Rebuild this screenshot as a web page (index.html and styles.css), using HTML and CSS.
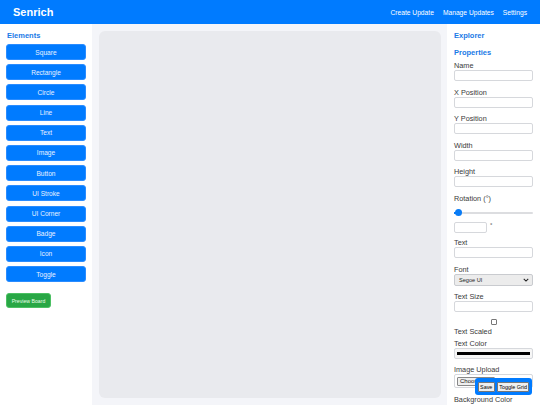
FILE: index.html
```html
<!DOCTYPE html>
<html lang="en">
<head>
<meta charset="utf-8">
<title>Senrich</title>
<link rel="stylesheet" href="styles.css">
</head>
<body>
<header class="topbar">
  <div class="brand">Senrich</div>
  <nav class="nav">
    <a href="#">Create Update</a>
    <a href="#">Manage Updates</a>
    <a href="#">Settings</a>
  </nav>
</header>
<main class="workspace">
  <aside class="elements">
    <h2 class="panel-title">Elements</h2>
    <button class="el-btn">Square</button>
    <button class="el-btn">Rectangle</button>
    <button class="el-btn">Circle</button>
    <button class="el-btn">Line</button>
    <button class="el-btn">Text</button>
    <button class="el-btn">Image</button>
    <button class="el-btn">Button</button>
    <button class="el-btn">UI Stroke</button>
    <button class="el-btn">UI Corner</button>
    <button class="el-btn">Badge</button>
    <button class="el-btn">Icon</button>
    <button class="el-btn">Toggle</button>
    <button class="preview-btn">Preview Board</button>
  </aside>
  <section class="board-wrap">
    <div class="board"></div>
  </section>
  <aside class="inspector">
    <h2 class="panel-title">Explorer</h2>
    <h2 class="panel-title props">Properties</h2>
    <div class="field"><label>Name</label><input class="txt" type="text"></div>
    <div class="field"><label>X Position</label><input class="txt" type="text"></div>
    <div class="field"><label>Y Position</label><input class="txt" type="text"></div>
    <div class="field"><label>Width</label><input class="txt" type="text"></div>
    <div class="field"><label>Height</label><input class="txt" type="text"></div>
    <div class="field rot">
      <label>Rotation (°)</label>
      <div class="slider"><span class="thumb"></span></div>
      <div class="deg-row"><input class="txt deg" type="text"><span class="deg-sign">°</span></div>
    </div>
    <div class="field"><label>Text</label><input class="txt" type="text"></div>
    <div class="field"><label>Font</label>
      <div class="select"><span>Segoe UI</span>
        <svg class="caret" viewBox="0 0 8 5" width="6" height="4"><path d="M1 1l3 3 3-3" fill="none" stroke="#222" stroke-width="1.4"/></svg>
      </div>
    </div>
    <div class="field"><label>Text Size</label><input class="txt" type="text"></div>
    <div class="check-row"><span class="check"></span></div>
    <div class="field scaled"><label>Text Scaled</label></div>
    <div class="field"><label>Text Color</label><div class="color"><span class="swatch"></span></div></div>
    <div class="field upload"><label>Image Upload</label><div class="file"><span class="file-btn">Choose File</span></div></div>
    <div class="field"><label>Background Color</label></div>
  </aside>
</main>
<div class="toolbar">
  <button class="tool-btn">Save</button>
  <button class="tool-btn">Toggle Grid</button>
</div>
</body>
</html>
```

FILE: styles.css
```css
* { box-sizing: border-box; }

html, body {
  margin: 0;
  height: 100%;
  overflow: hidden;
}

body {
  font-family: "Liberation Sans", Arial, sans-serif;
  background: #f4f5f9;
  color: #333;
  display: flex;
  flex-direction: column;
}

.topbar {
  height: 24px;
  background: #007bff;
  display: flex;
  align-items: center;
  justify-content: space-between;
  padding: 0 13px;
  flex-shrink: 0;
}

.brand {
  color: #fff;
  font-weight: bold;
  font-size: 11px;
}

.nav {
  display: flex;
  gap: 9px;
}

.nav a {
  color: #fff;
  text-decoration: none;
  font-size: 6.7px;
}

.workspace {
  flex: 1;
  display: flex;
  min-height: 0;
}

.panel-title {
  margin: 0;
  color: #1a7ae6;
  font-size: 7.5px;
  font-weight: bold;
  line-height: 9px;
}

.elements {
  width: 92px;
  background: #fff;
  padding: 7px 6px 0;
  display: flex;
  flex-direction: column;
  align-items: flex-start;
  flex-shrink: 0;
}

.elements .panel-title {
  margin-bottom: 4px;
  padding-left: 1px;
}

.el-btn {
  width: 80px;
  height: 16px;
  margin: 0 0 4.2px;
  padding: 0;
  border: 1px solid #2a8cff;
  border-radius: 3px;
  background: #007bff;
  color: #e8f1ff;
  font-family: inherit;
  font-size: 6.6px;
}

.preview-btn {
  margin-top: 7px;
  width: 45px;
  height: 15px;
  padding: 0;
  border: 1px solid #4cc063;
  border-radius: 3px;
  background: #28a745;
  color: #e8ffe9;
  font-family: inherit;
  font-size: 5.2px;
}

.board-wrap {
  flex: 1;
  padding: 7px 6px 7px 7px;
  display: flex;
}

.board {
  flex: 1;
  background: #e9eaee;
  border-radius: 6px;
}

.inspector {
  width: 93px;
  background: #fff;
  padding: 7px 7px 0;
  flex-shrink: 0;
  overflow: hidden;
}

.inspector .props {
  margin-top: 8px;
  margin-bottom: 4px;
}

.field {
  display: flex;
  flex-direction: column;
  margin-bottom: 6.5px;
}

.field label {
  font-size: 7.3px;
  line-height: 9px;
  color: #3a3a3a;
}

.txt {
  height: 11px;
  width: 79px;
  border: 1px solid #d6d8dc;
  border-radius: 2px;
  background: #fff;
  padding: 0;
}

.slider {
  position: relative;
  height: 2px;
  width: 79px;
  background: #dcdde0;
  border-radius: 1px;
  margin: 9px 0 8px;
}

.thumb {
  position: absolute;
  left: 1px;
  top: -2.5px;
  width: 7px;
  height: 7px;
  border-radius: 50%;
  background: #0a7cf5;
}

.slider::before {
  content: "";
  position: absolute;
  left: 0;
  top: 0;
  width: 4px;
  height: 2px;
  background: #0a7cf5;
}

.deg-row {
  display: flex;
  align-items: flex-start;
}

.deg {
  width: 33px;
}

.deg-sign {
  font-size: 6px;
  margin-left: 3px;
  line-height: 6px;
}

.rot { margin-bottom: 5.5px; }

.select {
  height: 12px;
  width: 79px;
  border: 1px solid #c9cbcf;
  border-radius: 2px;
  background: #ececec;
  display: flex;
  align-items: center;
  justify-content: space-between;
  padding: 0 3px 0 4px;
  font-size: 5.6px;
  color: #222;
}

.check-row {
  display: flex;
  justify-content: center;
  margin: 1px 0 2px;
}

.check {
  width: 6px;
  height: 6px;
  border: 1px solid #777;
  border-radius: 1px;
  background: #fff;
}

.scaled { margin-bottom: 3px; }

.color {
  height: 11px;
  width: 79px;
  border: 1px solid #d6d8dc;
  border-radius: 2px;
  padding: 3px 2px;
  background: #f6f6f6;
}

.swatch {
  display: block;
  height: 3px;
  background: #000;
}

.upload { margin-bottom: 6.5px; }

.file {
  height: 14px;
  width: 79px;
  border: 1px solid #d6d8dc;
  border-radius: 2px;
  padding: 2px 2px;
  display: flex;
  align-items: flex-start;
}

.file-btn {
  font-size: 6px;
  line-height: 7px;
  padding: 0 2px;
  background: #efefef;
  border: 1px solid #888;
  border-radius: 1px;
  color: #111;
}

/* floating board actions */
.toolbar {
  position: fixed;
  left: 475px;
  top: 378px;
  width: 57px;
  height: 17px;
  background: #007bff;
  border-radius: 3px;
  display: flex;
  align-items: center;
  justify-content: center;
  gap: 2px;
  padding: 0 2px;
}

.tool-btn {
  height: 10px;
  padding: 0 1.5px;
  border: 1px solid #777;
  border-radius: 1px;
  background: #efefef;
  color: #000;
  font-family: inherit;
  font-size: 5.4px;
  line-height: 8px;
}
```
